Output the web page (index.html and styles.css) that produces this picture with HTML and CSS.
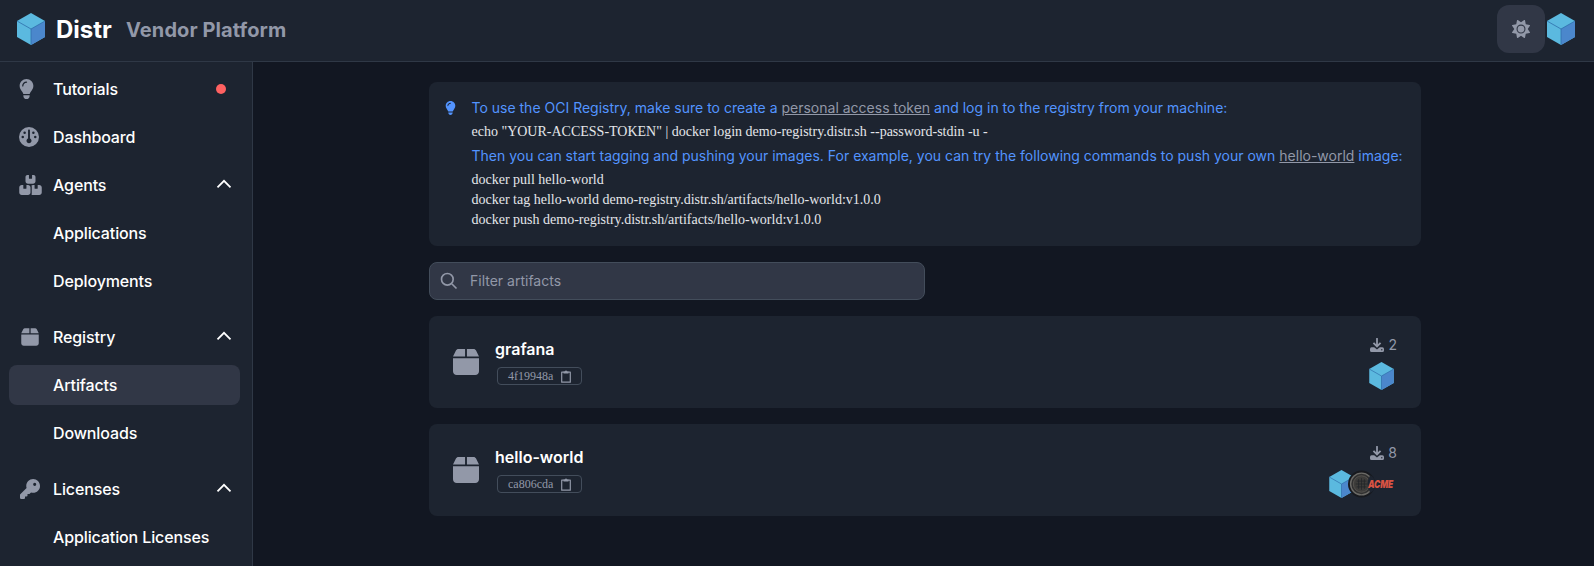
FILE: index.html
```
<!DOCTYPE html>
<html lang="en">
<head>
<meta charset="utf-8">
<title>Distr</title>
<link rel="stylesheet" href="styles.css">
</head>
<body>
<svg class="defs" width="0" height="0">
  <symbol id="cube" viewBox="0 0 28 32">
    <path d="M14 0 28 8 28 24 14 32 0 24 0 8Z" fill="#5bb9df"/>
    <path d="M14 16 28 8V24L14 32Z" fill="#4b87cc"/>
    <path d="M0 8 14 16 28 8M14 16V32" fill="none" stroke="#2f6fab" stroke-width=".8"/>
  </symbol>
  <symbol id="bulb" viewBox="0 0 384 512"><path d="M272 384c9.6-31.9 29.5-59.1 49.2-86.2c5.2-7.1 10.4-14.2 15.4-21.4c19.8-28.5 31.4-63 31.4-100.3C368 78.8 289.2 0 192 0S16 78.8 16 176c0 37.3 11.6 71.9 31.4 100.3c5 7.2 10.2 14.3 15.4 21.4c19.8 27.1 39.7 54.4 49.2 86.2l160 0zM192 512c44.2 0 80-35.8 80-80l0-16-160 0 0 16c0 44.2 35.8 80 80 80zM112 176c0 8.8-7.2 16-16 16s-16-7.2-16-16c0-61.9 50.1-112 112-112c8.8 0 16 7.2 16 16s-7.2 16-16 16c-44.2 0-80 35.8-80 80z"/></symbol>
  <symbol id="gauge" viewBox="0 0 512 512"><path fill-rule="evenodd" d="M0 256a256 256 0 1 1 512 0A256 256 0 1 1 0 256zM256 416c35.3 0 64-28.7 64-64c0-26.9-16.5-49.9-40-59.3L280 88c0-13.3-10.7-24-24-24s-24 10.7-24 24l0 204.7c-23.5 9.5-40 32.5-40 59.3c0 35.3 28.7 64 64 64zM144 112a32 32 0 1 0 0 64 32 32 0 1 0 0-64zM96 224a32 32 0 1 0 0 64 32 32 0 1 0 0-64zM416 224a32 32 0 1 0 0 64 32 32 0 1 0 0-64zM368 112a32 32 0 1 0 0 64 32 32 0 1 0 0-64z"/></symbol>
  <symbol id="boxes" viewBox="0 0 576 512"><path d="M248 0L208 0c-26.5 0-48 21.5-48 48l0 112c0 35.3 28.7 64 64 64l128 0c35.3 0 64-28.7 64-64l0-112c0-26.5-21.5-48-48-48L328 0l0 80c0 8.8-7.2 16-16 16l-48 0c-8.8 0-16-7.2-16-16l0-80zM64 256c-35.3 0-64 28.7-64 64L0 448c0 35.3 28.7 64 64 64l160 0c35.3 0 64-28.7 64-64l0-128c0-35.3-28.7-64-64-64l-40 0 0 80c0 8.8-7.2 16-16 16l-48 0c-8.8 0-16-7.2-16-16l0-80-40 0zM352 512l160 0c35.3 0 64-28.7 64-64l0-128c0-35.3-28.7-64-64-64l-40 0 0 80c0 8.8-7.2 16-16 16l-48 0c-8.8 0-16-7.2-16-16l0-80-40 0c-15 0-28.8 5.1-39.7 13.8c4.9 10.4 7.7 22 7.7 34.2l0 160c0 12.2-2.8 23.8-7.7 34.2C323.2 506.9 337 512 352 512z"/></symbol>
  <symbol id="box" viewBox="0 0 448 512"><path d="M50.7 58.5L0 160l208 0 0-128L93.7 32C75.5 32 58.9 42.3 50.7 58.5zM240 160l208 0L397.3 58.5C389.1 42.3 372.5 32 354.3 32L240 32l0 128zm208 32L0 192 0 416c0 35.3 28.7 64 64 64l320 0c35.3 0 64-28.7 64-64l0-224z"/></symbol>
  <symbol id="key" viewBox="0 0 512 512"><path fill-rule="evenodd" d="M336 352c97.2 0 176-78.8 176-176S433.2 0 336 0S160 78.8 160 176c0 18.7 2.9 36.8 8.3 53.7L7 391c-4.5 4.5-7 10.6-7 17l0 80c0 13.3 10.7 24 24 24l80 0c13.3 0 24-10.7 24-24l0-40 40 0c13.3 0 24-10.7 24-24l0-40 40 0c6.4 0 12.5-2.5 17-7l33.3-33.3c16.9 5.4 35 8.3 53.7 8.3zM376 96a40 40 0 1 1 0 80 40 40 0 1 1 0-80z"/></symbol>
  <symbol id="up" viewBox="0 0 16 10"><path d="M1.5 8.3 8 1.8l6.500 6.500" fill="none" stroke="#fff" stroke-width="1.800"/></symbol>
  <symbol id="sun" viewBox="0 0 512 512"><path fill-rule="evenodd" d="M361.5 1.2c5 2.1 8.6 6.6 9.6 11.9L391 121l107.9 19.800c5.3 1 9.800 4.600 11.900 9.600s1.500 10.700-1.600 15.200L446.900 256l62.300 90.300c3.100 4.500 3.700 10.200 1.600 15.200s-6.600 8.600-11.900 9.600L391 391 371.100 498.900c-1 5.300-4.600 9.800-9.600 11.900s-10.700 1.500-15.200-1.600L256 446.900l-90.300 62.300c-4.500 3.100-10.200 3.700-15.200 1.600s-8.600-6.600-9.600-11.900L121 391 13.100 371.100c-5.300-1-9.800-4.600-11.900-9.600s-1.500-10.700 1.600-15.200L65.100 256 2.800 165.700c-3.100-4.500-3.700-10.200-1.600-15.200s6.600-8.600 11.900-9.600L121 121 140.900 13.100c1-5.300 4.600-9.800 9.600-11.900s10.700-1.500 15.200 1.600L256 65.100 346.300 2.800c4.500-3.100 10.200-3.700 15.200-1.600zM160 256a96 96 0 1 1 192 0 96 96 0 1 1 -192 0zm224 0a128 128 0 1 0 -256 0 128 128 0 1 0 256 0z"/></symbol>
  <symbol id="clip" viewBox="0 0 10 13"><path d="M.7 2.200H9.300V12.200H.7Z" fill="none" stroke="#9298a8" stroke-width="1.200" stroke-linejoin="round"/><path d="M2.500 1.400H4a1 1 0 0 1 2 0H7.500V3.600H2.500Z"/></symbol>
  <symbol id="down" viewBox="0 0 14 14"><path fill-rule="evenodd" d="M6.100.7a.9.9 0 0 1 1.800 0V6.200L9.900 4.300 11.200 5.600 7 9.700 2.800 5.600 4.100 4.300 6.100 6.200ZM1.600 9.300H4.200L7 11.600 9.800 9.300H12.400A1.600 1.600 0 0 1 14 10.900V12.400A1.600 1.600 0 0 1 12.400 14H1.600A1.600 1.600 0 0 1 0 12.400V10.900A1.600 1.600 0 0 1 1.600 9.300ZM11.800 11a.7.7 0 1 0 0 1.400.7.7 0 1 0 0-1.400Z"/></symbol>
</svg>

<header class="topbar">
  <svg class="logo"><use href="#cube"/></svg>
  <span class="brand">Distr</span>
  <span class="subbrand">Vendor Platform</span>
  <button class="theme"><svg><use href="#sun"/></svg></button>
  <svg class="logo account"><use href="#cube"/></svg>
</header>

<div class="shell">
  <nav class="sidebar">
    <div class="group">
      <a class="item"><span class="ico"><svg class="i-bulb"><use href="#bulb"/></svg></span>Tutorials<i class="dot"></i></a>
      <a class="item"><span class="ico"><svg class="i-sq"><use href="#gauge"/></svg></span>Dashboard</a>
      <a class="item"><span class="ico"><svg class="i-boxes"><use href="#boxes"/></svg></span>Agents<svg class="chev"><use href="#up"/></svg></a>
      <a class="item sub">Applications</a>
      <a class="item sub">Deployments</a>
    </div>
    <div class="group">
      <a class="item"><span class="ico inset"><svg class="i-box"><use href="#box"/></svg></span>Registry<svg class="chev"><use href="#up"/></svg></a>
      <a class="item sub active">Artifacts</a>
      <a class="item sub">Downloads</a>
    </div>
    <div class="group">
      <a class="item"><span class="ico key"><svg class="i-sq"><use href="#key"/></svg></span>Licenses<svg class="chev"><use href="#up"/></svg></a>
      <a class="item sub">Application Licenses</a>
    </div>
  </nav>

  <main class="content">
    <section class="notice">
      <svg class="tip"><use href="#bulb"/></svg>
      <div class="help">
        <p class="say first">To use the OCI Registry, make sure to create a <a>personal access token</a> and log in to the registry from your machine:</p>
        <p class="cmd">echo "YOUR-ACCESS-TOKEN" | docker login demo-registry.distr.sh --password-stdin -u -</p>
        <p class="say">Then you can start tagging and pushing your images. For example, you can try the following commands to push your own <a>hello-world</a> image:</p>
        <p class="cmd">docker pull hello-world</p>
        <p class="cmd">docker tag hello-world demo-registry.distr.sh/artifacts/hello-world:v1.0.0</p>
        <p class="cmd">docker push demo-registry.distr.sh/artifacts/hello-world:v1.0.0</p>
      </div>
    </section>

    <label class="filter">
      <svg viewBox="0 0 24 24"><path d="m21 21-6-6m2-5a7 7 0 1 1-14 0 7 7 0 0 1 14 0Z"/></svg>
      <input type="text" placeholder="Filter artifacts">
    </label>

    <article class="card">
      <svg class="pkg"><use href="#box"/></svg>
      <div class="info">
        <h2>grafana</h2>
        <span class="hash">4f19948a<svg><use href="#clip"/></svg></span>
      </div>
      <div class="stats">
        <span class="count"><svg><use href="#down"/></svg>2</span>
        <span class="orgs"><svg class="org"><use href="#cube"/></svg></span>
      </div>
    </article>

    <article class="card">
      <svg class="pkg"><use href="#box"/></svg>
      <div class="info">
        <h2>hello-world</h2>
        <span class="hash">ca806cda<svg><use href="#clip"/></svg></span>
      </div>
      <div class="stats">
        <span class="count"><svg><use href="#down"/></svg>8</span>
        <span class="orgs">
          <svg class="org"><use href="#cube"/></svg>
          <svg class="org lens" viewBox="0 0 28 28">
            <circle cx="14" cy="14" r="14" fill="#17191e"/>
            <circle cx="14" cy="14" r="11.300" fill="#303030" stroke="#6b6a66" stroke-width="1.500"/>
            <circle cx="14" cy="14" r="8.500" fill="#3d3c3a" stroke="#55534f" stroke-width="1"/>
            <path d="M9 11H19M8 14H20M9 17H19M11 9V19M14 8V20M17 9V19" stroke="#222428" stroke-width=".8"/>
            <path d="M23 5Q17.500 14 23 23Q28 21 28 14Q28 7 23 5Z" fill="#1d2430"/>
          </svg>
          <span class="org acme"><b>ACME</b></span>
        </span>
      </div>
    </article>
  </main>
</div>
</body>
</html>
```
FILE: styles.css
```
* { box-sizing: border-box; }
body {
  margin: 0;
  height: 566px;
  overflow: hidden;
  display: flex;
  flex-direction: column;
  background: #121722;
  color: #fff;
  font-family: Inter, "Liberation Sans", sans-serif;
}
svg { display: block; flex: none; fill: #9298a8; }
.defs { position: absolute; }
p, h2 { margin: 0; }

.topbar {
  flex: none;
  height: 62px;
  padding: 0 19px 4px 17px;
  display: flex;
  align-items: center;
  background: #1d2430;
  border-bottom: 1px solid #2f3846;
}
.logo { width: 28px; height: 32px; }
.brand { margin-left: 11px; padding-top: 1px; font-size: 24px; font-weight: 700; width: 70px; }
.subbrand { padding-top: 2px; font-size: 20px; font-weight: 700; color: #9298a8; white-space: nowrap; letter-spacing: .1px; }
.theme {
  width: 48px;
  height: 48px;
  margin: 0 2px 0 auto;
  padding: 0;
  border: 0;
  border-radius: 12px;
  background: #313746;
  display: grid;
  place-items: center;
}
.theme svg { width: 18px; height: 18px; }

.shell { flex: 1; display: flex; min-height: 0; }
.sidebar {
  flex: none;
  width: 253px;
  padding: 7px 12px 0 9px;
  display: flex;
  flex-direction: column;
  gap: 16px;
  background: #1d2430;
  border-right: 1px solid #2f3846;
}
.group { display: flex; flex-direction: column; gap: 8px; }
.item {
  height: 40px;
  padding: 0 9px 0 10px;
  display: flex;
  align-items: center;
  border-radius: 8px;
  font-size: 16px;
  font-weight: 500;
  letter-spacing: -.12px;
}
.sub { padding-left: 44px; }
.active { background: #313746; }
.ico { width: 34px; flex: none; }
.i-bulb { width: 15px; height: 20px; }
.i-sq { width: 20px; height: 20px; }
.i-boxes { width: 23px; height: 20px; }
.i-box { width: 18px; height: 20px; }
.inset { padding-left: 2px; }
.key { padding-left: 1px; }
.dot { width: 10px; height: 10px; margin: 0 5px 0 auto; border-radius: 50%; background: #ff6161; }
.chev { width: 16px; height: 10px; margin: -3px -1px 0 auto; }

.content {
  flex: none;
  width: 1168px;
  padding: 20px 0 0 176px;
  display: flex;
  flex-direction: column;
  gap: 16px;
}
.notice {
  height: 164px;
  padding: 16px;
  display: flex;
  border-radius: 8px;
  background: #1d2430;
}
.tip { width: 11px; height: 14px; margin-top: 3px; fill: #5394ff; }
.help { margin-left: 15.500px; min-width: 0; }
.say { font-size: 14px; line-height: 20px; color: #5394ff; white-space: nowrap; margin-top: 4px; }
.first { margin-top: 0; }
.say a { color: #9298a8; text-decoration: underline; }
.cmd { font: 14px/20px "Liberation Serif", serif; color: #e4e6ea; white-space: nowrap; }
.say + .cmd { margin-top: 4px; }

.filter {
  width: 496px;
  height: 38px;
  padding: 0 9px;
  display: flex;
  align-items: center;
  gap: 11px;
  border: 1px solid #434d5b;
  border-radius: 8px;
  background: #313746;
}
.filter svg { width: 20px; height: 20px; fill: none; stroke: #9298a8; stroke-width: 2; }
.filter input { flex: 1; border: 0; padding: 0 0 2px; background: none; outline: 0; font: 14px Inter, sans-serif; color: #fff; }
.filter input::placeholder { color: #9298a8; opacity: 1; }

.card {
  height: 92px;
  padding: 0 24px;
  display: flex;
  align-items: center;
  border-radius: 8px;
  background: #1d2430;
}
.pkg { width: 26px; height: 30px; }
.info { margin: 0 0 2px 16px; }
.info h2 { font-size: 16px; line-height: 24px; font-weight: 600; }
.hash {
  width: 85px;
  height: 18px;
  margin: 6px 0 0 2px;
  padding: 0 10px;
  display: flex;
  align-items: center;
  justify-content: space-between;
  border: 1px solid #434d5b;
  border-radius: 4px;
  font: 12px "Liberation Serif", serif;
  color: #9298a8;
}
.hash svg { width: 10px; height: 13px; }
.stats { margin: 1px 0 0 auto; display: flex; flex-direction: column; align-items: flex-end; gap: 7px; }
.count { display: flex; align-items: center; gap: 4px; font-size: 14px; line-height: 20px; color: #9298a8; }
.count svg { width: 14px; height: 14px; }
.orgs { display: flex; align-items: center; margin-right: 2px; }
.org { width: 27px; height: 28px; }
.org + .org { margin-left: -7px; }
.acme { z-index: 1; }
.acme b {
  display: block;
  width: max-content;
  font: italic 900 11px/28px Inter, sans-serif;
  letter-spacing: -.2px;
  color: #d95343;
  transform: scaleX(.76);
  transform-origin: 0 50%;
}
```
